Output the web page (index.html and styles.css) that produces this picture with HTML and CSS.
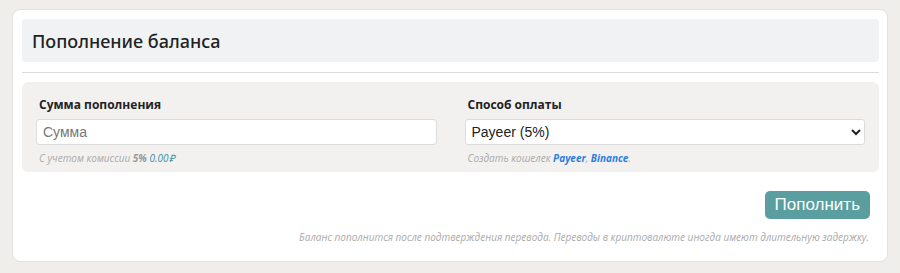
FILE: index.html
```html
<!DOCTYPE html>
<html>
<head>
    <title>Пополнение баланса</title>
    <link rel="stylesheet" href="styles.css">
</head>
<body>
    <div class="card">
        <div class="card-header">
            <h1>Пополнение баланса</h1>
        </div>
        <hr class="divider">

        <div class="panel">
            <div class="field">
                <label class="label">Сумма пополнения</label>
                <input type="text" class="control" placeholder="Сумма">
                <div class="hint">С учетом комиссии <b>5%</b> <span class="sum">0.00₽</span></div>
            </div>
            <div class="field">
                <label class="label">Способ оплаты</label>
                <select class="control">
                    <option>Payeer (5%)</option>
                    <option>Binance (5%)</option>
                </select>
                <div class="hint">Создать кошелек <a href="#">Payeer</a>, <a href="#">Binance</a>.</div>
            </div>
        </div>

        <div class="actions">
            <button class="btn">Пополнить</button>
        </div>
        <div class="footnote">Баланс пополнится после подтверждения перевода. Переводы в криптовалюте иногда имеют длительную задержку.</div>
    </div>
</body>
</html>
```

FILE: styles.css
```css
body {
    font-family: 'Open Sans', sans-serif;
    margin: 0;
    padding: 9px 12px;
    background: #efeeeb;
}

.card {
    background: white;
    border: 1px solid #e2e1de;
    border-radius: 8px;
    padding: 9px 8px 17px 9px;
}

.card-header {
    background: #f1f2f4;
    border-radius: 4px;
    height: 43px;
    display: flex;
    align-items: center;
    padding: 0 10px;
}

.card-header h1 {
    margin: 0;
    font-family: 'Noto Sans', sans-serif;
    font-size: 18px;
    font-weight: 500;
    color: #222;
}

.divider {
    border: none;
    border-top: 1px solid #dcdcdc;
    margin: 10px 0 9px 0;
}

.panel {
    background: #f2f1ef;
    border-radius: 6px;
    padding: 13px 14px 7px 14px;
    display: grid;
    grid-template-columns: 1fr 1fr;
    gap: 28px;
}

.label {
    display: block;
    font-size: 12px;
    font-weight: bold;
    color: #222;
    margin: 0 0 4px 3px;
    line-height: 20px;
}

.control {
    display: block;
    box-sizing: border-box;
    width: 100%;
    height: 26px;
    border: 1px solid #dcdcdc;
    border-radius: 3px;
    background: white;
    font-family: 'Liberation Sans', Arial, sans-serif;
    font-size: 14px;
    color: #222;
    padding: 0 6px;
}

select.control {
    padding: 0 2px;
}

.control::placeholder {
    color: #777;
}

.hint {
    font-size: 10px;
    font-style: italic;
    color: #aaa;
    margin: 6px 0 0 3px;
    line-height: 14px;
}

.hint b {
    color: #999;
}

.hint .sum {
    color: #3f8e9e;
}

.hint a {
    color: #2a7de1;
    font-weight: bold;
    text-decoration: none;
}

.actions {
    display: flex;
    justify-content: flex-end;
    padding: 19px 9px 0 0;
}

.btn {
    background: #5b9e9f;
    color: white;
    border: none;
    border-radius: 5px;
    font-family: 'Liberation Sans', Arial, sans-serif;
    font-size: 17px;
    height: 28px;
    padding: 0 10px;
    cursor: pointer;
}

.footnote {
    text-align: right;
    font-size: 10px;
    font-style: italic;
    color: #aaa;
    padding: 11px 10px 0 0;
    line-height: 14px;
}
```
